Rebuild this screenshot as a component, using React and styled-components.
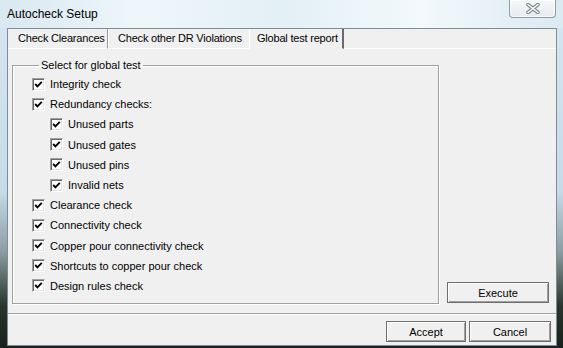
import React from 'react'
import styled, { createGlobalStyle } from 'styled-components'

const GlobalStyle = createGlobalStyle`
  html, body {
    margin: 0;
    padding: 0;
    width: 563px;
    height: 348px;
    overflow: hidden;
  }
  body {
    font-family: "Liberation Sans", Arial, sans-serif;
    font-size: 11px;
    color: #000;
  }
  * { box-sizing: border-box; }
`

const Window = styled.div`
  width: 563px;
  height: 348px;
  display: flex;
  flex-direction: column;
  background: linear-gradient(180deg, #d6e7f2 0%, #c6dbe8 55%, #8d9fa4 72%, #28342c 88%, #18211b 100%);
`
const TitleBar = styled.div`
  height: 28px;
  display: flex;
  justify-content: space-between;
  align-items: flex-start;
  padding-left: 7px;
  background: linear-gradient(90deg, #d9e8f1 0%, #eef6fa 25%, #e3f0f5 50%, #f3f9fc 75%, #dbe9f1 100%);
`
const Title = styled.span`
  font-size: 12px;
  line-height: 28px;
`
const CloseButton = styled.div`
  width: 47px;
  height: 18px;
  margin-right: 7px;
  border: 1px solid #8e9ba8;
  border-top: none;
  border-radius: 0 0 4px 4px;
  background: linear-gradient(180deg, #f6f8fa 0%, #e6ebf0 100%);
  box-shadow: inset 0 0 0 1px rgba(255, 255, 255, 0.7);
  display: flex;
  align-items: center;
  justify-content: center;
`
const Frame = styled.div`
  flex: 1;
  display: flex;
  padding: 0 6px 2px 7px;
`
const Client = styled.div`
  flex: 1;
  display: flex;
  flex-direction: column;
  border: 1px solid #7f8c96;
  background: #f0f0f0;
`
const TabStrip = styled.div`
  height: 20px;
  display: flex;
`
const Tab = styled.div`
  width: ${p => p.w}px;
  height: 20px;
  padding-left: ${p => (p.selected ? 7 : 9)}px;
  line-height: 19px;
  letter-spacing: -0.2px;
  white-space: nowrap;
  border-bottom: 1px solid ${p => (p.selected ? '#f0f0f0' : '#fff')};
  border-left: 1px solid ${p => (p.selected ? '#fff' : 'transparent')};
  border-right: ${p => (p.selected ? '2px solid #6a6a6a' : p.sep ? '1px solid #9a9a9a' : 'none')};
  box-shadow: ${p => (p.sep ? '1px 0 0 #fff' : 'none')};
`
const TabFill = styled.div`
  flex: 1;
  border-bottom: 1px solid #fff;
`
const Page = styled.div`
  flex: 1;
  display: flex;
  padding: 10px 0 9px 4px;
`
const GroupBox = styled.fieldset`
  width: 427px;
  margin: 0;
  padding: 2px 0 0 19px;
  border: 1px solid #a0a0a0;
  box-shadow: inset 1px 1px 0 #fff, 1px 1px 0 #fff;
  min-width: 0;
`
const Legend = styled.legend`
  margin-left: 7px;
  padding: 0 2px;
  line-height: 13px;
`
const List = styled.div`
  display: flex;
  flex-direction: column;
`
const Row = styled.label`
  height: 20.2px;
  display: flex;
  align-items: center;
  gap: 5px;
  padding-left: ${p => (p.sub ? 18 : 0)}px;
  white-space: nowrap;
`
const Box = styled.span`
  width: 13px;
  height: 13px;
  flex: none;
  background: #fff;
  border-top: 1px solid #a0a0a0;
  border-left: 1px solid #a0a0a0;
  border-bottom: 1px solid #fff;
  border-right: 1px solid #fff;
  box-shadow: inset 1px 1px 0 #696969, inset -1px -1px 0 #e3e3e3;
  display: flex;
  align-items: center;
  justify-content: center;
`
const SideColumn = styled.div`
  display: flex;
  flex-direction: column;
  justify-content: flex-end;
  margin-left: 8px;
  padding-bottom: 1px;
`
const Button = styled.div`
  width: ${p => p.w}px;
  height: 21px;
  border: 1px solid #6e6e6e;
  box-shadow: inset 1px 1px 0 #fff, inset -1px -1px 0 #a0a0a0;
  background: #f0f0f0;
  display: flex;
  align-items: center;
  justify-content: center;
`
const Footer = styled.div`
  height: 32px;
  border-top: 1px solid #a0a0a0;
  box-shadow: inset 0 1px 0 #fff;
  display: flex;
  justify-content: flex-end;
  align-items: flex-start;
  gap: 3px;
  padding: 7px 5px 0 0;
`

const Check = () => (
  <Box>
    <svg width="9" height="9" viewBox="0 0 9 9">
      <polyline points="1.2,4 3.4,6.3 7.8,1.8" fill="none" stroke="#000" strokeWidth="1.9" />
    </svg>
  </Box>
)

const items = [
  ['Integrity check', false],
  ['Redundancy checks:', false],
  ['Unused parts', true],
  ['Unused gates', true],
  ['Unused pins', true],
  ['Invalid nets', true],
  ['Clearance check', false],
  ['Connectivity check', false],
  ['Copper pour connectivity check', false],
  ['Shortcuts to copper pour check', false],
  ['Design rules check', false],
]

export default function App() {
  return (
    <>
      <GlobalStyle />
      <Window>
        <TitleBar>
          <Title>Autocheck Setup</Title>
          <CloseButton>
            <svg width="16" height="11" viewBox="0 0 16 11">
              <path d="M3 1.5 L13 9.5 M13 1.5 L3 9.5" stroke="#7d8590" strokeWidth="3.6" strokeLinecap="round" />
              <path d="M3 1.5 L13 9.5 M13 1.5 L3 9.5" stroke="#fbfcfd" strokeWidth="1.6" strokeLinecap="round" />
            </svg>
          </CloseButton>
        </TitleBar>
        <Frame>
          <Client>
            <TabStrip>
              <Tab w={100} sep>Check Clearances</Tab>
              <Tab w={141}>Check other DR Violations</Tab>
              <Tab w={95} selected>Global test report</Tab>
              <TabFill />
            </TabStrip>
            <Page>
              <GroupBox>
                <Legend>Select for global test</Legend>
                <List>
                  {items.map(([label, sub]) => (
                    <Row key={label} sub={sub}>
                      <Check />
                      {label}
                    </Row>
                  ))}
                </List>
              </GroupBox>
              <SideColumn>
                <Button w={102}>Execute</Button>
              </SideColumn>
            </Page>
            <Footer>
              <Button w={80}>Accept</Button>
              <Button w={82}>Cancel</Button>
            </Footer>
          </Client>
        </Frame>
      </Window>
    </>
  )
}
